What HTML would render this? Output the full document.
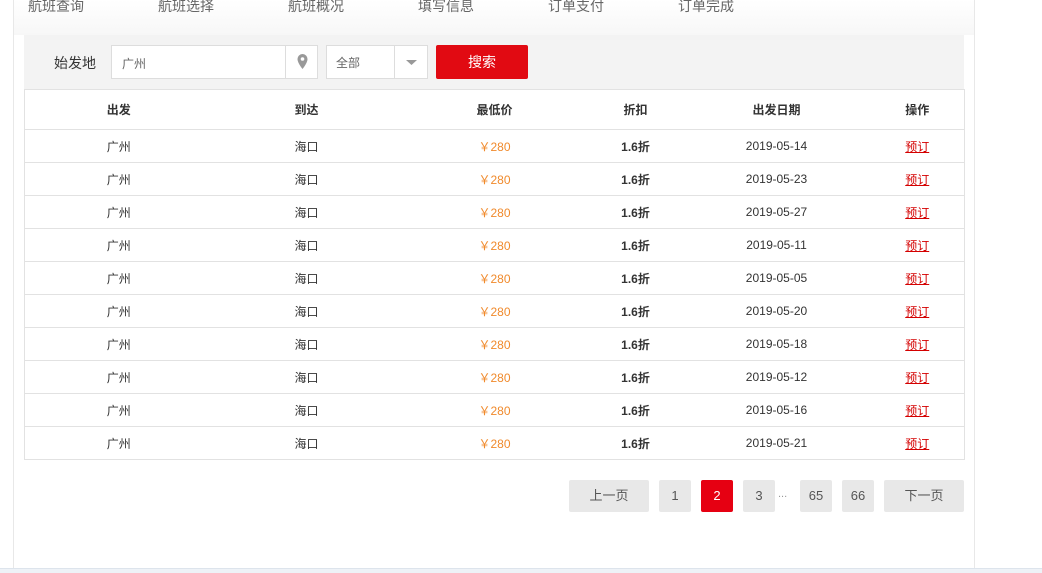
<!DOCTYPE html><html><head><meta charset="utf-8"><style>
*{margin:0;padding:0;box-sizing:border-box}
body{width:1042px;height:573px;background:#fff;font-family:"Liberation Sans","Noto Sans CJK SC",sans-serif;position:relative;overflow:hidden;font-size:12px;color:#333}
.wrap{position:absolute;left:13px;top:0;width:962px;height:568px;border-left:1px solid #e8e8e8;border-right:1px solid #e8e8e8;background:#fff}
.top{position:absolute;left:0;top:0;width:960px;height:35px;background:linear-gradient(#fff,#f7f7f7)}
.step{position:absolute;top:-4px;font-size:14px;color:#666}
.sb{position:absolute;left:10px;top:35px;width:940px;height:55px;background:#f3f3f3}
.lab{position:absolute;left:30px;top:18px;font-size:14px;color:#333}
.inp{position:absolute;top:10px;height:34px;background:#fff;border:1px solid #ddd;color:#666}
.btn{position:absolute;left:412px;top:10px;width:92px;height:34px;background:#e10a12;border-radius:2px;color:#fff;font-size:14px;text-align:center;line-height:34px}
table{position:absolute;left:10px;top:89px;width:940px;border-collapse:collapse;border:1px solid #e2e2e2;table-layout:fixed}
td,th{text-align:center;height:33px;border-top:1px solid #e2e2e2;font-size:12px;padding:0}
th{height:40px;font-weight:bold;color:#333}
td:nth-child(3){color:#f08a2c}td:nth-child(4){font-weight:bold}
td:nth-child(6) span{color:#d40000;text-decoration:underline}
.pg{position:absolute;top:480px;height:32px;background:#e8e8e8;border-radius:2px;text-align:center;line-height:32px;color:#555;font-size:13px}
.bot{position:absolute;left:0;top:568px;width:1042px;height:5px;background:#eef2f7;border-top:1px solid #dde4ec}
</style></head><body>
<div class="wrap">
<div class="top">
<span class="step" style="left:14px">航班查询</span><span class="step" style="left:144px">航班选择</span><span class="step" style="left:274px">航班概况</span><span class="step" style="left:404px">填写信息</span><span class="step" style="left:534px">订单支付</span><span class="step" style="left:664px">订单完成</span>
</div>
<div class="sb"><span class="lab">始发地</span>
<div class="inp" style="left:87px;width:207px"><span style="position:absolute;left:10px;top:9px">广州</span><div style="position:absolute;left:173px;top:0;width:33px;height:32px;border-left:1px solid #ddd"><svg width="33" height="32"><path d="M16.5 8a5 5 0 0 0-5 5c0 4 5 10 5 10s5-6 5-10a5 5 0 0 0-5-5z" fill="#999"/><circle cx="16.5" cy="13" r="1.8" fill="#fff"/></svg></div></div>
<div class="inp" style="left:302px;width:102px"><span style="position:absolute;left:9px;top:8px">全部</span><div style="position:absolute;left:67px;top:0;width:34px;height:32px;border-left:1px solid #ddd"><svg width="34" height="32"><path d="M11 14h11l-5.5 5z" fill="#999"/></svg></div></div>
<div class="btn">搜索</div></div>
<table><colgroup><col style="width:188px"><col style="width:188px"><col style="width:188px"><col style="width:94px"><col style="width:188px"><col style="width:94px"></colgroup>
<tr><th>出发</th><th>到达</th><th>最低价</th><th>折扣</th><th>出发日期</th><th>操作</th></tr>
<tr><td>广州</td><td>海口</td><td>￥280</td><td>1.6折</td><td>2019-05-14</td><td><span>预订</span></td></tr>
<tr><td>广州</td><td>海口</td><td>￥280</td><td>1.6折</td><td>2019-05-23</td><td><span>预订</span></td></tr>
<tr><td>广州</td><td>海口</td><td>￥280</td><td>1.6折</td><td>2019-05-27</td><td><span>预订</span></td></tr>
<tr><td>广州</td><td>海口</td><td>￥280</td><td>1.6折</td><td>2019-05-11</td><td><span>预订</span></td></tr>
<tr><td>广州</td><td>海口</td><td>￥280</td><td>1.6折</td><td>2019-05-05</td><td><span>预订</span></td></tr>
<tr><td>广州</td><td>海口</td><td>￥280</td><td>1.6折</td><td>2019-05-20</td><td><span>预订</span></td></tr>
<tr><td>广州</td><td>海口</td><td>￥280</td><td>1.6折</td><td>2019-05-18</td><td><span>预订</span></td></tr>
<tr><td>广州</td><td>海口</td><td>￥280</td><td>1.6折</td><td>2019-05-12</td><td><span>预订</span></td></tr>
<tr><td>广州</td><td>海口</td><td>￥280</td><td>1.6折</td><td>2019-05-16</td><td><span>预订</span></td></tr>
<tr><td>广州</td><td>海口</td><td>￥280</td><td>1.6折</td><td>2019-05-21</td><td><span>预订</span></td></tr>
</table>
</div>
<div class="pg" style="left:569px;width:80px">上一页</div>
<div class="pg" style="left:659px;width:32px">1</div>
<div class="pg" style="left:701px;width:32px;background:#e60012;color:#fff">2</div>
<div class="pg" style="left:743px;width:32px">3</div>
<span style="position:absolute;left:778px;top:488px;color:#999;font-size:11px">...</span>
<div class="pg" style="left:800px;width:32px">65</div>
<div class="pg" style="left:842px;width:32px">66</div>
<div class="pg" style="left:884px;width:80px">下一页</div>
<div class="bot"></div>
</body></html>
